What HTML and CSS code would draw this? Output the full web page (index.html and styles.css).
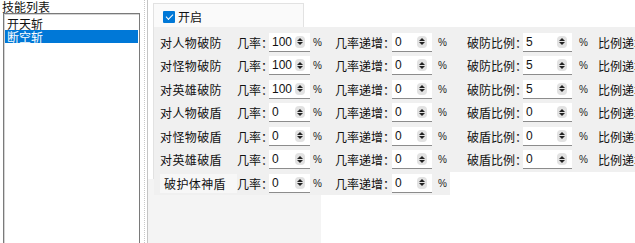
FILE: index.html
```html
<!DOCTYPE html>
<html lang="zh">
<head>
  <meta charset="UTF-8" />
  <title>技能破防设置</title>
  <link rel="stylesheet" href="styles.css">
</head>
<body>
  <div class="app">
    <div class="skills">
      <div class="skills-title">技能列表</div>
      <ul class="listbox">
        <li>开天斩</li>
        <li class="selected">断空斩</li>
      </ul>
    </div>

    <div class="editor">
      <div class="frame">
        <label class="enable"><span class="check"></span>开启</label>

        <div class="row first">
          <span class="row-label">对人物破防</span>
          <span class="g1 lbl">几率：</span><span class="num w1">100<i class="spin"></i></span><span class="pct p1">%</span>
          <span class="g2 lbl">几率递增：</span><span class="num w2">0<i class="spin"></i></span><span class="pct p2">%</span>
          <span class="g3 lbl">破防比例：</span><span class="num w3">5<i class="spin"></i></span><span class="pct p3">%</span>
          <span class="g4 lbl">比例递增：</span><span class="num w2">0<i class="spin"></i></span><span class="pct p2">%</span>
        </div>
        <div class="row">
          <span class="row-label">对怪物破防</span>
          <span class="g1 lbl">几率：</span><span class="num w1">100<i class="spin"></i></span><span class="pct p1">%</span>
          <span class="g2 lbl">几率递增：</span><span class="num w2">0<i class="spin"></i></span><span class="pct p2">%</span>
          <span class="g3 lbl">破防比例：</span><span class="num w3">5<i class="spin"></i></span><span class="pct p3">%</span>
          <span class="g4 lbl">比例递增：</span><span class="num w2">0<i class="spin"></i></span><span class="pct p2">%</span>
        </div>
        <div class="row">
          <span class="row-label">对英雄破防</span>
          <span class="g1 lbl">几率：</span><span class="num w1">100<i class="spin"></i></span><span class="pct p1">%</span>
          <span class="g2 lbl">几率递增：</span><span class="num w2">0<i class="spin"></i></span><span class="pct p2">%</span>
          <span class="g3 lbl">破防比例：</span><span class="num w3">5<i class="spin"></i></span><span class="pct p3">%</span>
          <span class="g4 lbl">比例递增：</span><span class="num w2">0<i class="spin"></i></span><span class="pct p2">%</span>
        </div>
        <div class="row">
          <span class="row-label">对人物破盾</span>
          <span class="g1 lbl">几率：</span><span class="num w1">0<i class="spin"></i></span><span class="pct p1">%</span>
          <span class="g2 lbl">几率递增：</span><span class="num w2">0<i class="spin"></i></span><span class="pct p2">%</span>
          <span class="g3 lbl">破盾比例：</span><span class="num w3">0<i class="spin"></i></span><span class="pct p3">%</span>
          <span class="g4 lbl">比例递增：</span><span class="num w2">0<i class="spin"></i></span><span class="pct p2">%</span>
        </div>
        <div class="row">
          <span class="row-label">对怪物破盾</span>
          <span class="g1 lbl">几率：</span><span class="num w1">0<i class="spin"></i></span><span class="pct p1">%</span>
          <span class="g2 lbl">几率递增：</span><span class="num w2">0<i class="spin"></i></span><span class="pct p2">%</span>
          <span class="g3 lbl">破盾比例：</span><span class="num w3">0<i class="spin"></i></span><span class="pct p3">%</span>
          <span class="g4 lbl">比例递增：</span><span class="num w2">0<i class="spin"></i></span><span class="pct p2">%</span>
        </div>
        <div class="row">
          <span class="row-label">对英雄破盾</span>
          <span class="g1 lbl">几率：</span><span class="num w1">0<i class="spin"></i></span><span class="pct p1">%</span>
          <span class="g2 lbl">几率递增：</span><span class="num w2">0<i class="spin"></i></span><span class="pct p2">%</span>
          <span class="g3 lbl">破盾比例：</span><span class="num w3">0<i class="spin"></i></span><span class="pct p3">%</span>
          <span class="g4 lbl">比例递增：</span><span class="num w2">0<i class="spin"></i></span><span class="pct p2">%</span>
        </div>
        <div class="row extra">
          <span class="row-label">破护体神盾</span>
          <span class="g1 lbl">几率：</span><span class="num w1">0<i class="spin"></i></span><span class="pct p1">%</span>
          <span class="g2 lbl">几率递增：</span><span class="num w2">0<i class="spin"></i></span><span class="pct p-end">%</span>
        </div>
      </div>
      <div class="tail"></div>
    </div>
  </div>
</body>
</html>
```

FILE: styles.css
```css
* { box-sizing: border-box; margin: 0; padding: 0; }

body {
  width: 635px;
  height: 243px;
  overflow: hidden;
  background: #fff;
  color: #111;
  font-family: "Noto Sans CJK SC", sans-serif;
  font-size: 12px;
}

.app {
  display: flex;
  height: 243px;
}

/* 技能列表 */
.skills {
  width: 145px;
  margin-right: 2px;
  border-right: 1px dotted #c8c8c8;
  padding-left: 3px;
  display: flex;
  flex-direction: column;
}

.skills-title {
  height: 13px;
  line-height: 13px;
  margin-left: -1px;
}

.listbox {
  list-style: none;
  width: 137px;
  flex: 1;
  border: 1px solid #7a7a7a;
  border-bottom: none;
  box-shadow: inset 1px 1px 0 #d4d4d4;
  background: #fff;
  padding-top: 3px;
}

.listbox li {
  height: 13px;
  line-height: 13px;
  padding-left: 2px;
  margin-left: 1px;
  width: 133px;
}

.listbox li.selected {
  background: #0078d7;
  color: #fff;
}

/* 右侧编辑区 */
.editor {
  flex: 1;
  border-left: 1px solid #c4c4c4;
  padding: 3px 0 0 5px;
  display: flex;
  flex-direction: column;
}

.frame {
  width: 151px;
  height: 176px;
  border: 1px solid #e2e2e2;
  background: #fafafa;
}

.tail {
  width: 173px;
  flex: 1;
  margin-left: -5px;
  background: #f4f4f4;
}

.enable {
  display: flex;
  align-items: center;
  height: 23px;
  padding: 2px 0 0 9px;
}

.check {
  width: 12px;
  height: 12px;
  margin-right: 3px;
  border-radius: 1px;
  background: #0078d7;
  display: flex;
  align-items: center;
  justify-content: center;
}

.check::after {
  content: "";
  width: 6px;
  height: 3px;
  margin-top: -2px;
  border-left: 1.6px solid #fff;
  border-bottom: 1.6px solid #fff;
  transform: rotate(-45deg);
}

.row {
  display: flex;
  align-items: center;
  width: max-content;
  height: 23.5px;
  padding-left: 6px;
  background: #f0f0f0;
  white-space: nowrap;
}

.row.first {
  height: 27px;
  padding-top: 3.5px;
}

.row.extra {
  position: relative;
}

.row-label {
  width: 77px;
  letter-spacing: 0.4px;
}

.row.extra .row-label {
  padding-left: 4px;
  height: 19px;
  line-height: 19px;
  background: #f7f7f7;
}

.g1 { width: 32px; }
.g2 { width: 57px; }
.g3 { width: 56px; }
.g4 { width: 58px; }

.num {
  height: 19px;
  display: flex;
  align-items: center;
  justify-content: space-between;
  padding: 0 5px 0 3px;
  background: #fff;
  border-bottom: 1px solid #8c8c8c;
  font-family: "Liberation Sans", Arial, sans-serif;
  font-size: 12px;
}

.w1 { width: 41px; }
.w2 { width: 40px; }
.w3 { width: 49px; }

.spin {
  width: 10px;
  height: 12px;
  border-radius: 4px;
  background: #e2e2e2;
  display: flex;
  flex-direction: column;
  align-items: center;
  justify-content: center;
  gap: 1px;
}

.spin::before, .spin::after {
  content: "";
  border-left: 3px solid transparent;
  border-right: 3px solid transparent;
}

.spin::before { border-bottom: 3px solid #222; }
.spin::after { border-top: 3px solid #222; }

.pct {
  font-family: "Liberation Sans", Arial, sans-serif;
  font-size: 10px;
  color: #222;
}

.p1 { width: 25px; padding-left: 3px; }
.p2 { width: 35px; padding-left: 6px; }
.p3 { width: 26px; padding-left: 7px; }
.p-end { width: 18px; padding-left: 6px; }
```
